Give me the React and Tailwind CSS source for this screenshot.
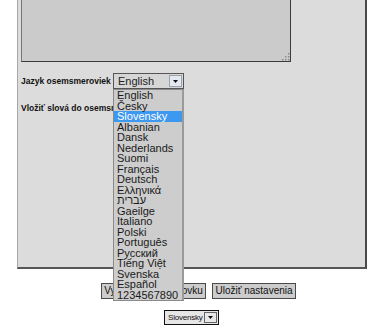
import React from 'react';

const languages = [
  'English',
  'Česky',
  'Slovensky',
  'Albanian',
  'Dansk',
  'Nederlands',
  'Suomi',
  'Français',
  'Deutsch',
  'Ελληνικά',
  'עברית',
  'Gaeilge',
  'Italiano',
  'Polski',
  'Português',
  'Русский',
  'Tiếng Việt',
  'Svenska',
  'Español',
  '1234567890',
];

function Arrow({ className }) {
  return (
    <svg viewBox="0 0 7 4" className={className}>
      <path d="M0 0h7L3.5 4z" fill="#111" />
    </svg>
  );
}

// dotted resize grip like the old textarea corner
function Grip() {
  const dots = [
    [8, 2], [8, 5], [5, 5], [8, 8], [5, 8], [2, 8],
  ];
  return (
    <svg viewBox="0 0 10 10" className="absolute right-[1px] bottom-[1px] w-[10px] h-[10px]">
      {dots.map(([x, y]) => (
        <rect key={`${x}-${y}`} x={x} y={y} width="1.5" height="1.5" fill="#8a8a8a" />
      ))}
    </svg>
  );
}

export default function App() {
  return (
    <div className="relative w-[389px] h-[332px] overflow-hidden bg-white font-['Liberation_Sans',Arial,sans-serif] text-[#111]">
      {/* main settings panel, top part scrolled away */}
      <div className="ml-[17px] -mt-[11px] w-[350px] h-[280px] bg-[#dcdcdc] border-l border-l-[#a8a8a8] border-r-2 border-r-[#4a4a4a] border-b-2 border-b-[#555] pl-[3px]">
        <div className="relative w-[270px] h-[73px]">
          <textarea
            readOnly
            className="block w-full h-full resize-none bg-[#cbcbcb] border border-[#3c3c3c] border-l-[#777] outline-none"
          />
          <Grip />
        </div>

        <div className="mt-[11px] flex items-center h-[16px]">
          <span className="text-[8.5px] font-bold w-[92px] whitespace-nowrap">Jazyk osemsmeroviek</span>
          <div className="relative">
            <div className="w-[71px] h-[16px] border border-[#555] bg-[#d6d6d6] flex items-center justify-between pl-[4px] pr-[1px]">
              <span className="text-[11px] leading-none text-[#222]">English</span>
              <div className="w-[13px] h-[12px] bg-[#e4e9ef] border border-[#9aa4b0] flex items-center justify-center">
                <Arrow className="w-[5px] h-[3px]" />
              </div>
            </div>
            <div className="absolute left-0 top-full w-[71px] bg-[#cdcdcd] border border-[#8a8a8a] border-r-2 border-r-[#9a9a9a] z-10">
              {languages.map((lang) => (
                <div
                  key={lang}
                  className={
                    lang === 'Slovensky'
                      ? 'h-[10.5px] leading-[10.5px] text-[11px] pl-[3px] bg-[#3d98ef] text-white whitespace-nowrap'
                      : 'h-[10.5px] leading-[10.5px] text-[11px] pl-[3px] text-[#1a1a1a] whitespace-nowrap'
                  }
                >
                  {lang}
                </div>
              ))}
            </div>
          </div>
        </div>

        <div className="mt-[13px] h-[12px] flex items-center">
          <span className="text-[8.5px] font-bold whitespace-nowrap">Vložiť slová do osemsmerovky</span>
        </div>
      </div>

      <div className="mt-[14px] flex gap-[6px] pl-[101px]">
        <button className="w-[105px] h-[16px] bg-[#cccccc] border border-[#4a4a4a] text-[10px] leading-none text-[#111] whitespace-nowrap overflow-hidden">
          Vytvor osemsmerovku
        </button>
        <button className="w-[84px] h-[16px] bg-[#cccccc] border border-[#4a4a4a] text-[10px] leading-none text-[#111] whitespace-nowrap">
          Uložiť nastavenia
        </button>
      </div>

      <div className="mt-[11px] pl-[164px]">
        <div className="w-[55px] h-[15px] border border-[#111] bg-[#e6e6e6] flex items-center justify-between pl-[3px] pr-[1px]">
          <span className="text-[8px] leading-none tracking-[-0.2px]">Slovensky</span>
          <div className="w-[13px] h-[11px] bg-[#e8e8e8] border border-[#666] flex items-center justify-center">
            <Arrow className="w-[5px] h-[3px]" />
          </div>
        </div>
      </div>
    </div>
  );
}
